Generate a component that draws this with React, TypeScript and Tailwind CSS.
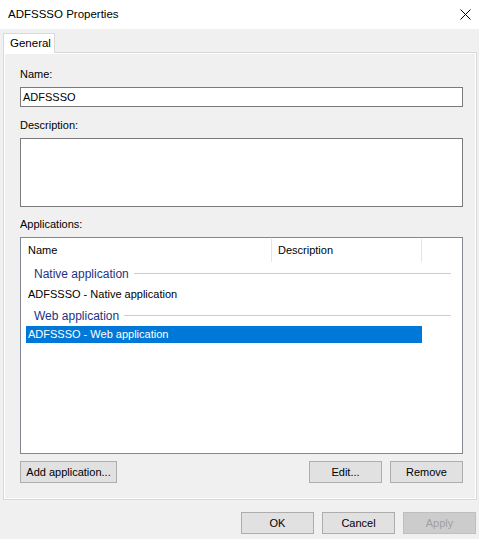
const font = "font-['Segoe_UI','Liberation_Sans',Arial,sans-serif]";

function Button({
  label,
  width,
  disabled = false,
}: {
  label: string;
  width: string;
  disabled?: boolean;
}) {
  return (
    <div
      className={`${width} h-[22px] flex items-center justify-center border text-[11px] ${
        disabled
          ? "bg-[#cccccc] border-[#bfbfbf] text-[#a0a0a0]"
          : "bg-[#e1e1e1] border-[#adadad] text-black"
      }`}
    >
      {label}
    </div>
  );
}

function GroupHeader({ label }: { label: string }) {
  return (
    <div className="flex items-center h-[21px] pl-[13px] pr-[11px]">
      <span className="text-[#1e3287] text-[12px]">{label}</span>
      <div className="flex-1 h-px bg-[#c8cce0] ml-[5px]" />
    </div>
  );
}

export default function App() {
  return (
    <div className={`w-[479px] h-[539px] bg-[#f0f0f0] flex flex-col ${font} text-black`}>
      {/* title bar */}
      <div className="h-[29px] bg-white flex items-center justify-between pl-[8px] pr-[8px] shrink-0">
        <span className="text-[11.5px]">ADFSSSO Properties</span>
        <svg width="11" height="11" viewBox="0 0 11 11">
          <path d="M0.5 0.5 L10.5 10.5 M10.5 0.5 L0.5 10.5" stroke="#000" strokeWidth="1" />
        </svg>
      </div>

      {/* tabs */}
      <div className="h-[23px] flex items-end pl-[3px] shrink-0">
        <div className="w-[52px] h-[20px] bg-white border border-b-0 border-[#d9d9d9] flex items-center pl-[6px] text-[11.5px] relative top-px z-10">
          General
        </div>
      </div>

      {/* tab panel */}
      <div className="ml-[3px] mr-[2px] h-[448px] border border-[#d9d9d9] shadow-[inset_1px_1px_0_#fff,inset_-1px_-1px_0_#fff] flex flex-col pl-[16px] pr-[13px] pt-[15px] shrink-0">
        <div className="text-[11px] leading-[13px]">Name:</div>
        <div className="mt-[6px] h-[20px] bg-white border border-[#7a7a7a] flex items-center pl-[2px] text-[11px]">
          ADFSSSO
        </div>

        <div className="mt-[12px] text-[11px] leading-[13px]">Description:</div>
        <div className="mt-[6px] h-[69px] bg-white border border-[#7a7a7a]" />

        <div className="mt-[11px] text-[11px] leading-[13px]">Applications:</div>
        <div className="mt-[6px] h-[217px] bg-white border border-[#828790] flex flex-col">
          {/* header */}
          <div className="h-[25px] flex text-[11px] mr-[11px]">
            <div className="w-[251px] flex items-center pl-[7px] border-r border-[#e5e5e5] my-[1px]">Name</div>
            <div className="w-[150px] flex items-center pl-[6px] border-r border-[#e5e5e5] my-[1px]">Description</div>
          </div>
          <GroupHeader label="Native application" />
          <div className="h-[21px] flex items-center pl-[7px] text-[11px]">ADFSSSO - Native application</div>
          <GroupHeader label="Web application" />
          <div className="h-[17px] ml-[5px] w-[396px] bg-[#0078d7] text-white flex items-center pl-[2px] text-[11px]">
            ADFSSSO - Web application
          </div>
        </div>

        <div className="mt-[7px] flex items-center">
          <Button label="Add application..." width="w-[97px]" />
          <div className="flex-1" />
          <Button label="Edit..." width="w-[73px]" />
          <div className="w-[8px]" />
          <Button label="Remove" width="w-[73px]" />
        </div>
      </div>

      {/* dialog buttons */}
      <div className="flex justify-end gap-[8px] pr-[3px] mt-[12px]">
        <Button label="OK" width="w-[73px]" />
        <Button label="Cancel" width="w-[73px]" />
        <Button label="Apply" width="w-[73px]" disabled />
      </div>
    </div>
  );
}
